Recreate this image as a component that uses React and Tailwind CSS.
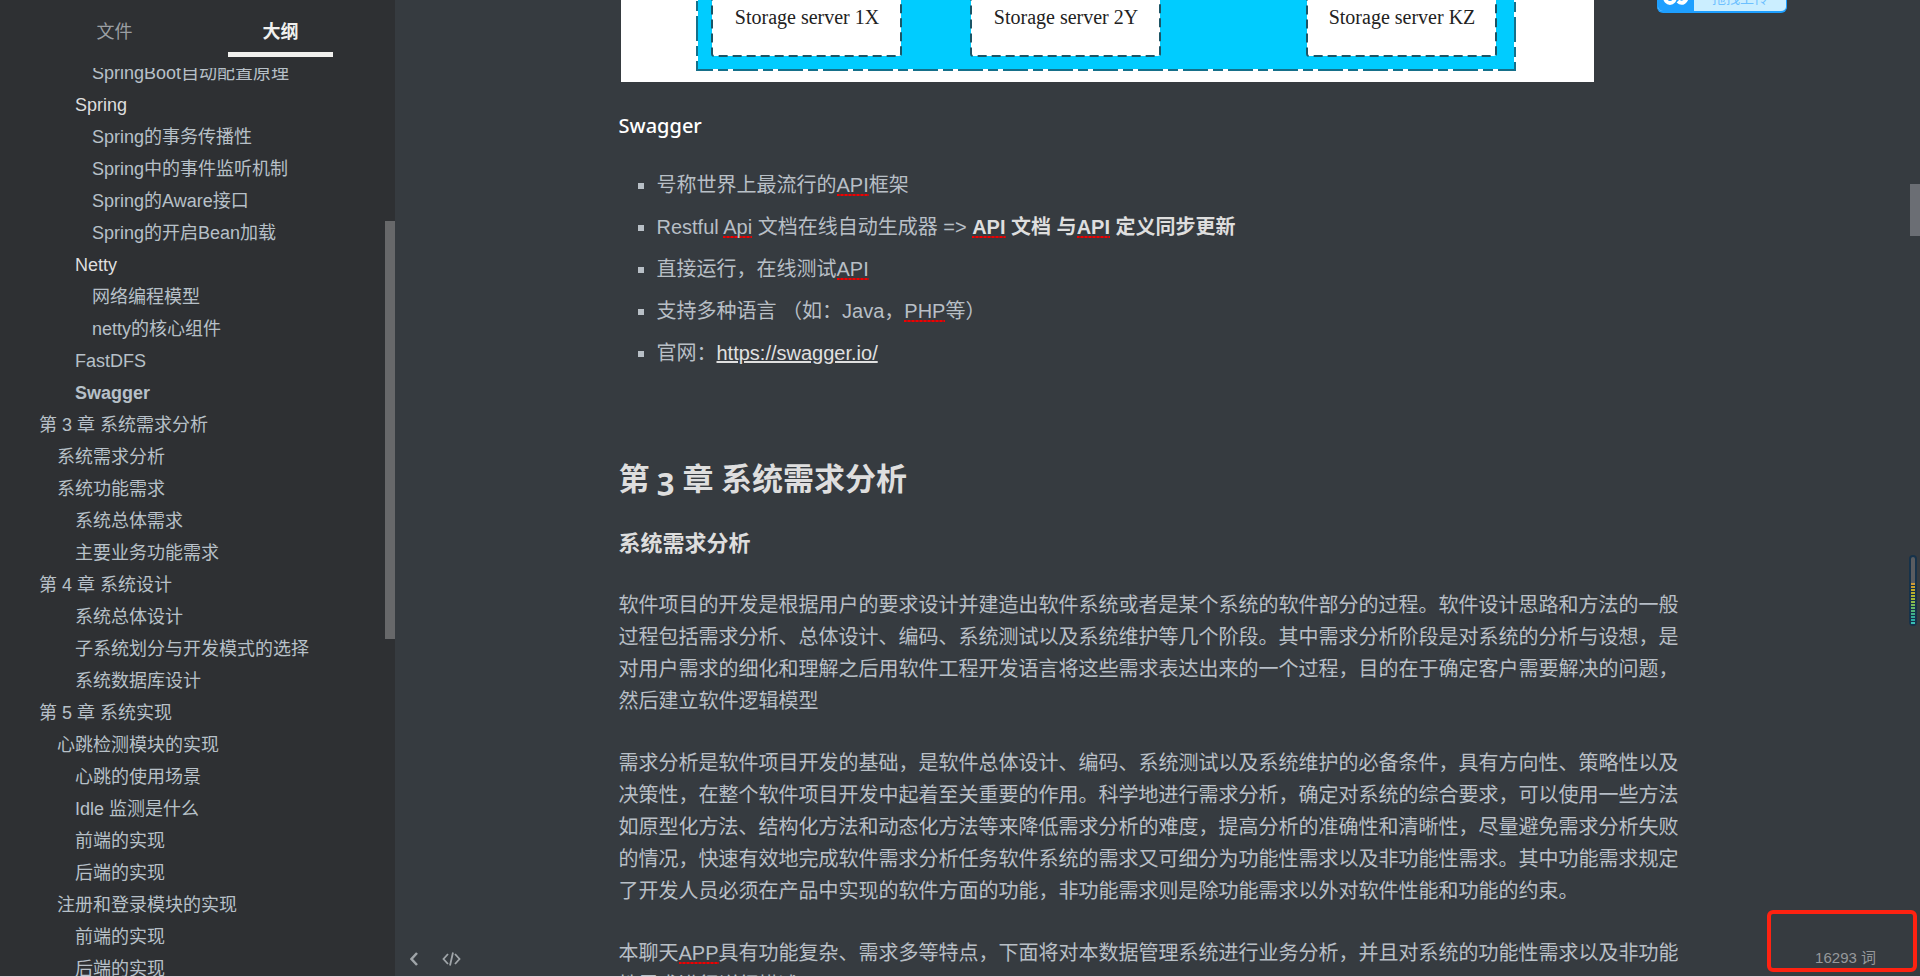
import React, { useState } from 'react';

const outline = [
    { level: 4, text: 'SpringBoot自动配置原理' },
    { level: 3, text: 'Spring', open: true },
    { level: 4, text: 'Spring的事务传播性' },
    { level: 4, text: 'Spring中的事件监听机制' },
    { level: 4, text: 'Spring的Aware接口' },
    { level: 4, text: 'Spring的开启Bean加载' },
    { level: 3, text: 'Netty', open: true },
    { level: 4, text: '网络编程模型' },
    { level: 4, text: 'netty的核心组件' },
    { level: 3, text: 'FastDFS' },
    { level: 3, text: 'Swagger', active: true },
    { level: 1, text: '第 3 章 系统需求分析' },
    { level: 2, text: '系统需求分析' },
    { level: 2, text: '系统功能需求' },
    { level: 3, text: '系统总体需求' },
    { level: 3, text: '主要业务功能需求' },
    { level: 1, text: '第 4 章 系统设计' },
    { level: 3, text: '系统总体设计' },
    { level: 3, text: '子系统划分与开发模式的选择' },
    { level: 3, text: '系统数据库设计' },
    { level: 1, text: '第 5 章 系统实现' },
    { level: 2, text: '心跳检测模块的实现' },
    { level: 3, text: '心跳的使用场景' },
    { level: 3, text: 'Idle 监测是什么' },
    { level: 3, text: '前端的实现' },
    { level: 3, text: '后端的实现' },
    { level: 2, text: '注册和登录模块的实现' },
    { level: 3, text: '前端的实现' },
    { level: 3, text: '后端的实现' },
];

const indents = {
    1: 'pl-[39px]',
    2: 'pl-[57px]',
    3: 'pl-[75px]',
    4: 'pl-[92px]',
};

// Mot signalé par le correcteur orthographique
const Typo = ({ children }) => (
    <span className="bg-[repeating-linear-gradient(90deg,#f00000_0_2px,#a81418_2px_4px)] bg-[length:100%_2px] bg-bottom bg-no-repeat">
        {children}
    </span>
);

const Sidebar = () => {
    const [tab, setTab] = useState('outline');
    const tabClass = (name) =>
        tab === name
            ? 'w-[105px] border-b-[5px] border-[#f0f0ee] font-bold text-[#f0f0ee]'
            : 'w-[105px] border-b-[5px] border-transparent text-[#9b9fa3]';

    return (
        <aside className="relative flex w-[395px] shrink-0 flex-col bg-[#2e3033]">
            <div className="flex h-[57px] shrink-0 justify-between px-[62px] text-lg">
                <button type="button" onClick={() => setTab('files')} className={`pt-3 ${tabClass('files')}`}>文件</button>
                <button type="button" onClick={() => setTab('outline')} className={`pt-3 ${tabClass('outline')}`}>大纲</button>
            </div>
            <nav className="mt-[11px] flex grow flex-col justify-end overflow-hidden">
                <ul className="-mb-[9px] text-lg leading-8 text-[#b7c0c8]">
                    {outline.map((item, idx) => (
                        <li key={idx} className={indents[item.level]}>
                            <a
                                href="#"
                                className={item.active ? 'font-bold' : item.open ? 'text-[#dedede]' : ''}
                            >
                                {item.text}
                            </a>
                        </li>
                    ))}
                </ul>
            </nav>
            <div className="absolute top-[221px] right-0 h-[418px] w-[10px] bg-[#67686a]"></div>
        </aside>
    );
};

const servers = [
    { x: 91, name: 'Storage server 1X' },
    { x: 350, name: 'Storage server 2Y' },
    { x: 686, name: 'Storage server KZ' },
];

// Bas du schéma d'architecture FastDFS
const StorageDiagram = () => (
    <svg viewBox="0 0 973 82" className="ml-[2px] block h-[82px] w-[973px] bg-white">
        <rect x="76" y="-20" width="818" height="90" fill="#00ccff" stroke="#fff" strokeWidth="2" />
        <rect x="76" y="-20" width="818" height="90" fill="none" stroke="#16708a" strokeWidth="2" strokeDasharray="25 5 10 5" />
        {servers.map((s) => (
            <g key={s.name}>
                <rect x={s.x} y="-20" width="189" height="76" rx="2" fill="#fff" />
                <rect x={s.x} y="-20" width="189" height="76" rx="2" fill="none" stroke="#1c5566" strokeWidth="2" strokeDasharray="9 5" />
                <text x={s.x + 95} y="24" textAnchor="middle" fill="#222" fontSize="20" className="font-['Liberation_Serif',serif]">
                    {s.name}
                </text>
            </g>
        ))}
    </svg>
);

const Article = () => (
    <article className="mx-auto w-[1068px] max-w-full text-xl leading-8 text-[#b8bfc6]">
        <StorageDiagram />

        <h4 className="mt-7 font-['Noto_Sans','Noto_Sans_CJK_SC',sans-serif] font-medium text-white">Swagger</h4>

        <ul className="mt-[27px] list-[square] space-y-[10px] pl-[38px]">
            <li>号称世界上最流行的<Typo>API</Typo>框架</li>
            <li>
                Restful <Typo>Api</Typo> 文档在线自动生成器 =&gt;{' '}
                <strong className="text-[#dedede]"><Typo>API</Typo> 文档 与<Typo>API</Typo> 定义同步更新</strong>
            </li>
            <li>直接运行，在线测试<Typo>API</Typo></li>
            <li>支持多种语言 （如：Java，<Typo>PHP</Typo>等）</li>
            <li>官网：<a href="https://swagger.io/" className="text-[#e0e0e0] underline">https://swagger.io/</a></li>
        </ul>

        <h1 className="mt-[85px] font-['Lato','Noto_Sans_CJK_SC',sans-serif] text-[31px] leading-[48px] font-bold text-[#dedede]">
            第 <span className="font-['Open_Sans',sans-serif] oldstyle-nums">3</span> 章 系统需求分析
        </h1>
        <h2 className="mt-[26px] text-[22px] leading-8 font-bold text-[#dedede]">系统需求分析</h2>

        <p className="mt-[29px]">
            软件项目的开发是根据用户的要求设计并建造出软件系统或者是某个系统的软件部分的过程。软件设计思路和方法的一般过程包括需求分析、总体设计、编码、系统测试以及系统维护等几个阶段。其中需求分析阶段是对系统的分析与设想，是对用户需求的细化和理解之后用软件工程开发语言将这些需求表达出来的一个过程，目的在于确定客户需要解决的问题，然后建立软件逻辑模型
        </p>
        <p className="mt-[30px]">
            需求分析是软件项目开发的基础，是软件总体设计、编码、系统测试以及系统维护的必备条件，具有方向性、策略性以及决策性，在整个软件项目开发中起着至关重要的作用。科学地进行需求分析，确定对系统的综合要求，可以使用一些方法如原型化方法、结构化方法和动态化方法等来降低需求分析的难度，提高分析的准确性和清晰性，尽量避免需求分析失败的情况，快速有效地完成软件需求分析任务软件系统的需求又可细分为功能性需求以及非功能性需求。其中功能需求规定了开发人员必须在产品中实现的软件方面的功能，非功能需求则是除功能需求以外对软件性能和功能的约束。
        </p>
        <p className="mt-[30px]">
            本聊天<Typo>APP</Typo>具有功能复杂、需求多等特点，下面将对本数据管理系统进行业务分析，并且对系统的功能性需求以及非功能性需求进行详细描述。
        </p>
    </article>
);

const UploadBadge = () => (
    <button type="button" className="absolute top-0 right-[133px] flex h-[13px] w-[130px] overflow-hidden rounded-b-md border-x border-b-2 border-[#1e9fff] bg-[#cbeeff] text-sm">
        <span className="flex h-full w-[36px] shrink-0 justify-center bg-[#1e9fff]">
            <svg width="26" height="8" viewBox="0 0 26 8" fill="none" stroke="#fff" strokeWidth="4">
                <path d="M2 -3a5 6 0 0 0 10 0M15 1q3 3 6 1t3 -7" />
            </svg>
        </span>
        <span className="-mt-[10px] grow text-center leading-4 text-[#6cc0ff]">拖拽上传</span>
    </button>
);

const levels = [
    '#d09a35', '#c8a02c', '#c2a82a', '#b8ae2c', '#b0b42e', '#a4b838', '#90ba48',
    '#7aba58', '#66b868', '#50b47a', '#40b08a', '#34ac98', '#2caaa4', '#38bdb4',
];

const LevelMeter = () => (
    <div className="absolute top-[555px] right-[3px] flex h-[71px] w-2 flex-col rounded-sm border-2 border-[#16324a] bg-[#5a5c60]">
        <div className="mt-auto flex flex-col gap-px bg-[#16324a]">
            {levels.map((color) => (
                <i key={color} className="h-[2px]" style={{ backgroundColor: color }}></i>
            ))}
        </div>
    </div>
);

const StatusBar = () => (
    <>
        <div className="absolute bottom-[10px] left-[15px] flex items-center gap-6 text-[#a0a5a9]">
            <button type="button" aria-label="Sidebar">
                <svg width="8" height="14" viewBox="0 0 8 14" fill="none" stroke="currentColor" strokeWidth="2.500">
                    <path d="M7 1 1.500 7 7 13" />
                </svg>
            </button>
            <button type="button" aria-label="Source">
                <svg width="19" height="14" viewBox="0 0 19 14" fill="none" stroke="currentColor" strokeWidth="1.800">
                    <path d="M6 2 1.500 7 6 12M13 2l4.500 5L13 12M11 0.500l-3 13" />
                </svg>
            </button>
        </div>
        <div className="absolute right-[3px] bottom-1 flex h-[62px] w-[150px] items-end justify-end rounded-md border-4 border-[#ff2211] pr-[37px] text-[15px] leading-5 text-[#96999c]">
            16293 词
        </div>
    </>
);

const App = () => (
    <div className="flex h-screen flex-col overflow-hidden border-b border-[#e8cdd6] bg-[#363b40] font-['Liberation_Sans','Noto_Sans_CJK_SC',sans-serif]">
        <div className="flex min-h-0 grow">
            <Sidebar />
            <main className="relative grow overflow-hidden pr-[10px]">
                <Article />
                <UploadBadge />
                <div className="absolute top-[184px] right-0 h-[52px] w-[10px] bg-[#6b6e74]"></div>
                <LevelMeter />
                <StatusBar />
            </main>
        </div>
    </div>
);

export default App;
